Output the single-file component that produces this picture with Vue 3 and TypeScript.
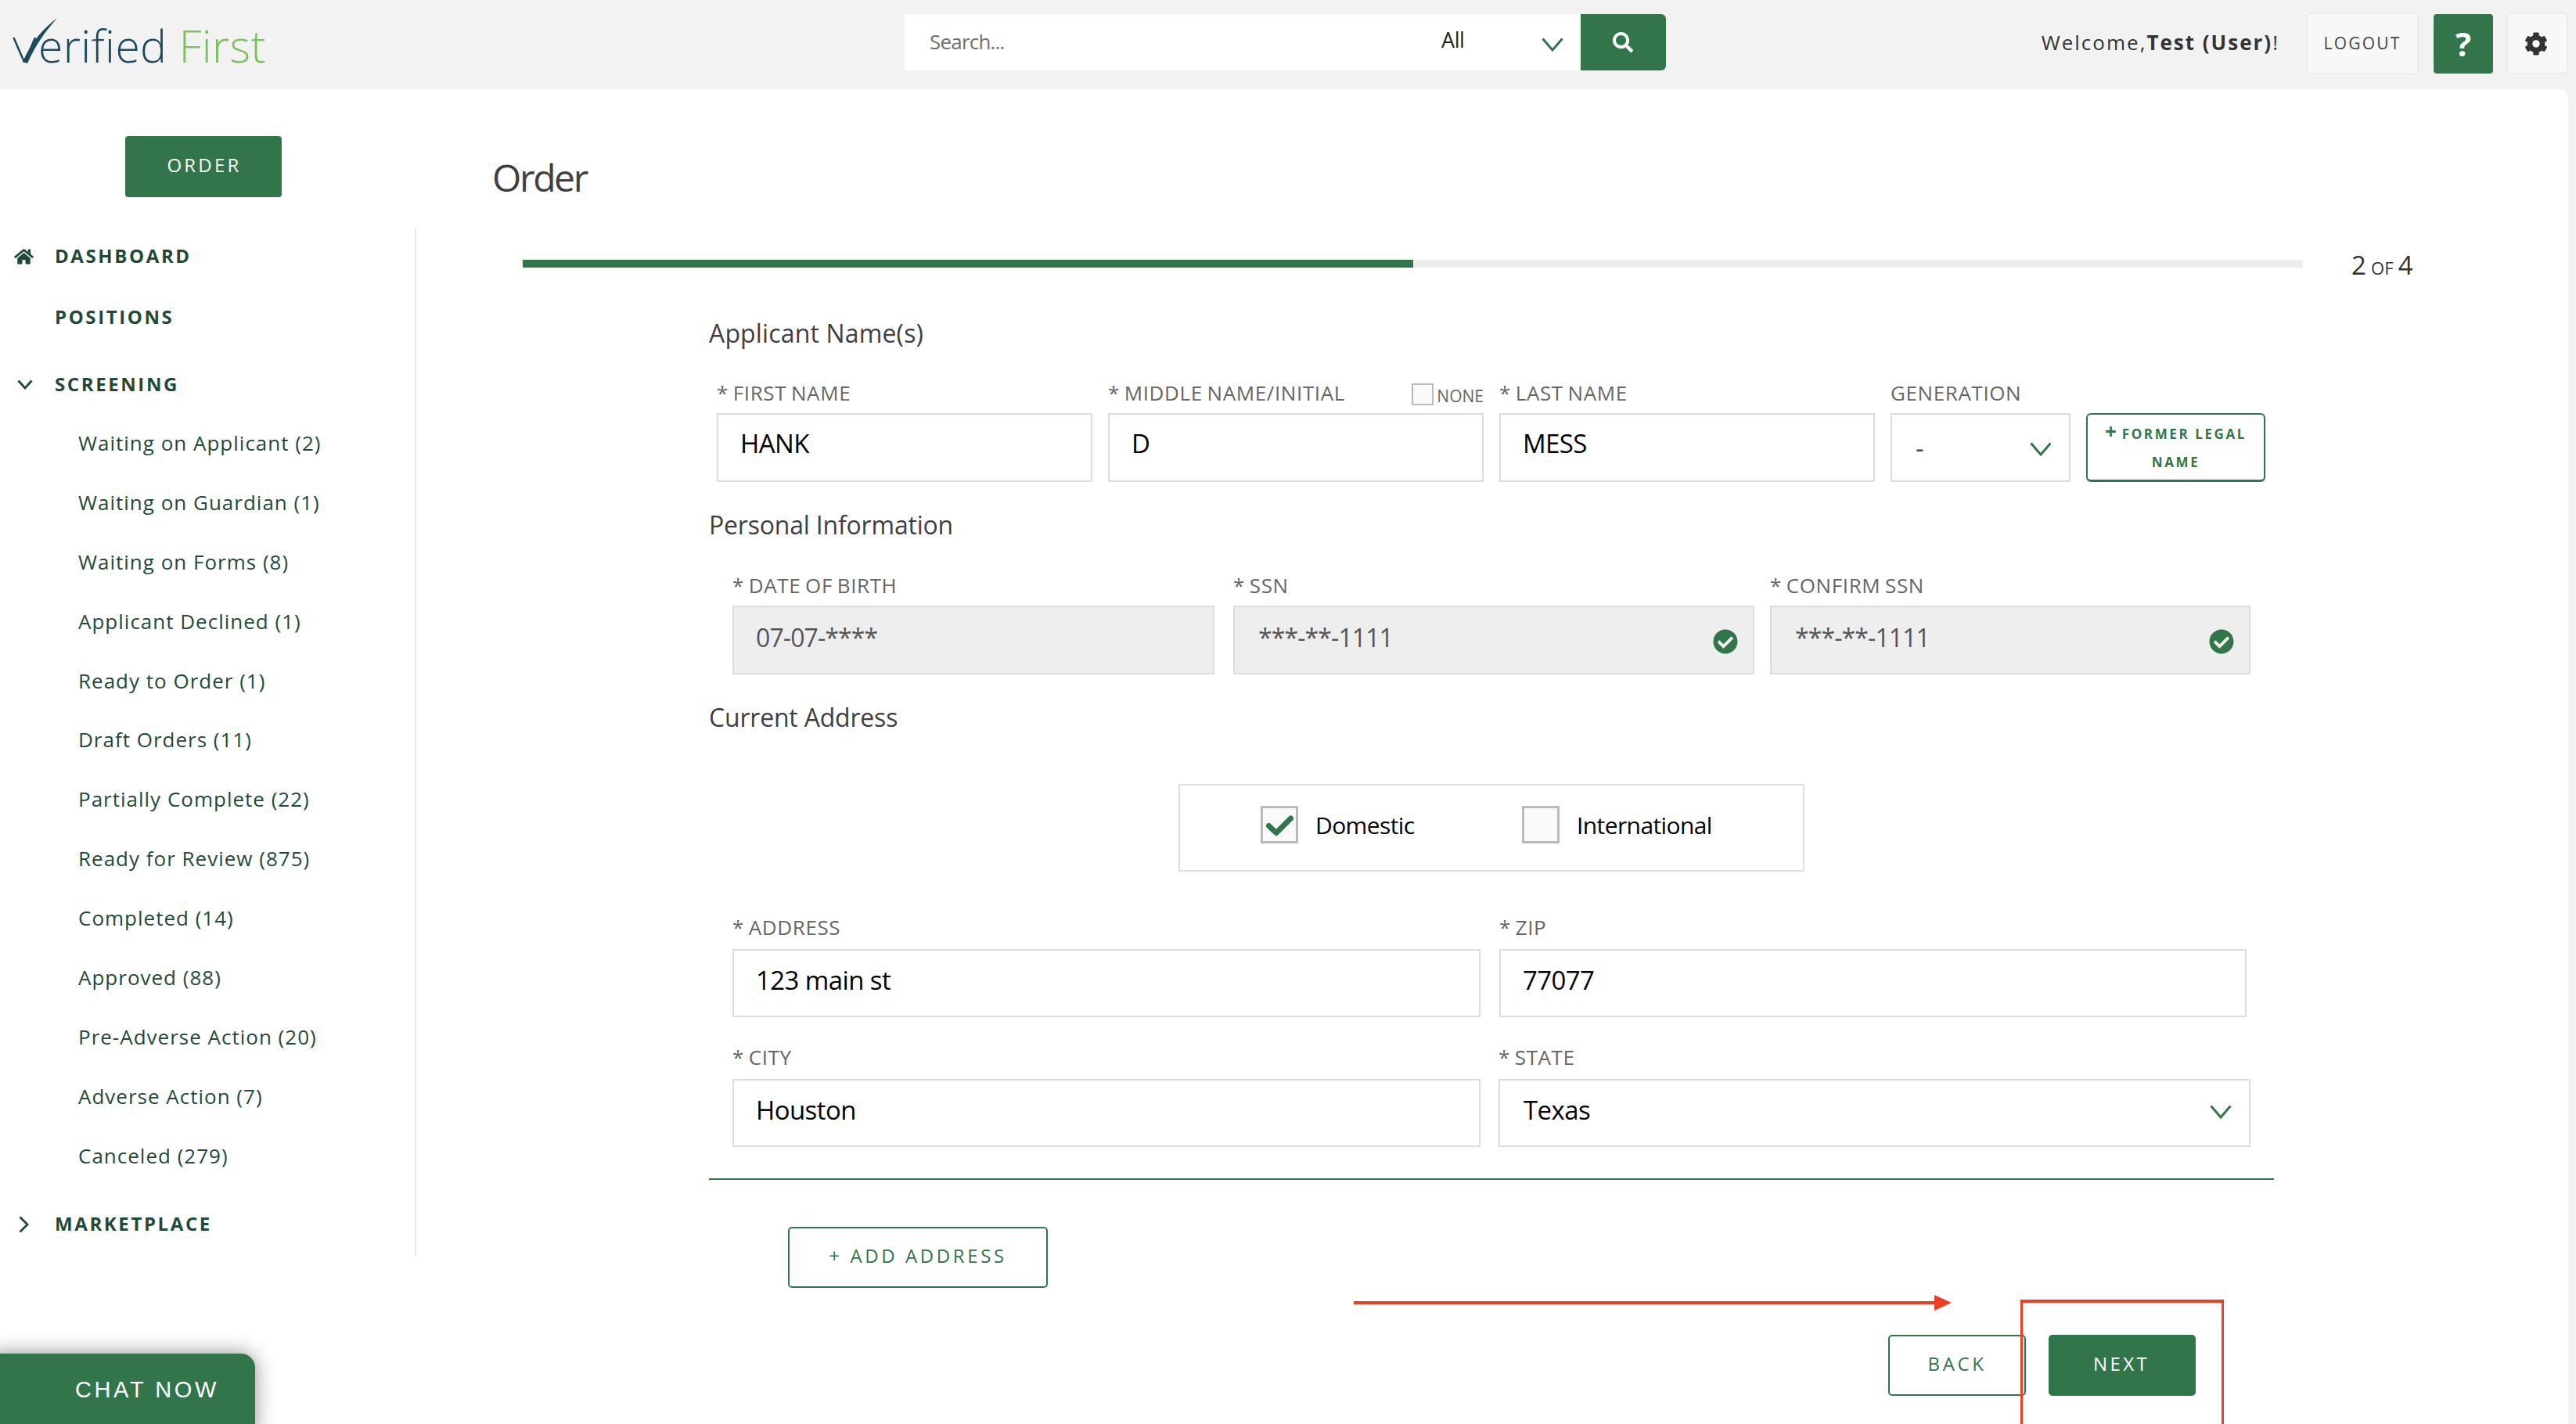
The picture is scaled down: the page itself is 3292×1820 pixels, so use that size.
<script setup lang="ts">
const subItems: string[] = [
  'Waiting on Applicant (2)',
  'Waiting on Guardian (1)',
  'Waiting on Forms (8)',
  'Applicant Declined (1)',
  'Ready to Order (1)',
  'Draft Orders (11)',
  'Partially Complete (22)',
  'Ready for Review (875)',
  'Completed (14)',
  'Approved (88)',
  'Pre-Adverse Action (20)',
  'Adverse Action (7)',
  'Canceled (279)'
]
const checkCircle =
  'M504 256c0 136.967-111.033 248-248 248S8 392.967 8 256 119.033 8 256 8s248 111.033 248 248zM227.314 387.314l184-184c6.248-6.248 6.248-16.379 0-22.627l-22.627-22.627c-6.248-6.249-16.379-6.25-22.628 0L216 308.118l-70.059-70.059c-6.248-6.248-16.379-6.248-22.628 0l-22.627 22.627c-6.248 6.248-6.248 16.379 0 22.627l104 104c6.249 6.249 16.379 6.249 22.628.001z'
</script>

<template>
  <div class="page">
    <header class="topbar">
      <div class="logo">
        <span class="logo-a"><span class="logo-v">V</span>erified</span> <span class="logo-b">First</span>
        <svg class="swoosh" viewBox="0 0 80 90"><path d="M29 79 C41 52 56 36 73 23 C60 38 46 56 35 81 Z" fill="#1d4a5e" /></svg>
      </div>
      <div class="search">
        <div class="search-input">Search...</div>
        <div class="search-all">All</div>
        <svg class="chev search-chev" viewBox="0 0 28 18"><polyline points="1.5,1.5 14,16 26.5,1.5" /></svg>
        <button class="search-btn">
          <svg viewBox="0 0 512 512" class="search-icon"><path fill="#fff" d="M505 442.7L405.3 343c-4.5-4.5-10.6-7-17-7H372c27.6-35.3 44-79.7 44-128C416 93.1 322.9 0 208 0S0 93.1 0 208s93.1 208 208 208c48.3 0 92.7-16.4 128-44v16.3c0 6.4 2.5 12.5 7 17l99.7 99.7c9.4 9.4 24.6 9.4 33.9 0l28.3-28.3c9.4-9.4 9.4-24.6.1-34zM208 336c-70.7 0-128-57.2-128-128 0-70.7 57.2-128 128-128 70.7 0 128 57.2 128 128 0 70.7-57.2 128-128 128z" /></svg>
        </button>
      </div>
      <div class="top-right">
        <div class="welcome">Welcome,<b>Test (User)</b>!</div>
        <button class="ghost logout">LOGOUT</button>
        <button class="help">?</button>
        <button class="ghost gear">
          <svg viewBox="0 0 512 512" class="gear-icon"><path fill="#333" d="M487.4 315.7l-42.6-24.6c4.3-23.2 4.3-47 0-70.2l42.6-24.6c4.9-2.8 7.1-8.6 5.5-14-11.1-35.6-30-67.8-54.7-94.6-3.8-4.1-10-5.1-14.8-2.3L380.8 110c-17.9-15.4-38.5-27.3-60.8-35.1V25.8c0-5.6-3.9-10.5-9.4-11.7-36.7-8.2-74.3-7.8-109.2 0-5.5 1.2-9.4 6.1-9.4 11.7V75c-22.2 7.9-42.8 19.8-60.8 35.1L88.7 85.5c-4.9-2.8-11-1.9-14.8 2.3-24.7 26.7-43.6 58.9-54.7 94.6-1.7 5.4.6 11.2 5.5 14L67.3 221c-4.3 23.2-4.3 47 0 70.2l-42.6 24.6c-4.9 2.8-7.1 8.6-5.5 14 11.1 35.6 30 67.8 54.7 94.6 3.8 4.1 10 5.1 14.8 2.3l42.6-24.6c17.9 15.4 38.5 27.3 60.8 35.1v49.2c0 5.6 3.9 10.5 9.4 11.7 36.7 8.2 74.3 7.8 109.2 0 5.5-1.2 9.4-6.1 9.4-11.7v-49.2c22.2-7.9 42.8-19.8 60.8-35.1l42.6 24.6c4.9 2.8 11 1.9 14.8-2.3 24.7-26.7 43.6-58.9 54.7-94.6 1.5-5.5-.7-11.3-5.6-14.1zM256 336c-44.1 0-80-35.9-80-80s35.9-80 80-80 80 35.9 80 80-35.9 80-80 80z" /></svg>
        </button>
      </div>
    </header>

    <div class="body">
      <aside class="side">
        <button class="order-btn">ORDER</button>
        <nav class="nav">
          <div class="nav-head">
            <svg viewBox="0 0 576 512" class="home"><path fill="#1f4a3a" d="M280.37 148.26L96 300.11V464a16 16 0 0 0 16 16l112.06-.29a16 16 0 0 0 15.92-16V368a16 16 0 0 1 16-16h64a16 16 0 0 1 16 16v95.64a16 16 0 0 0 16 16.05L464 480a16 16 0 0 0 16-16V300L295.67 148.26a12.19 12.19 0 0 0-15.3 0zM571.6 251.47L488 182.56V44.05a12 12 0 0 0-12-12h-56a12 12 0 0 0-12 12v72.61L318.47 43a48 48 0 0 0-61 0L4.34 251.47a12 12 0 0 0-1.6 16.9l25.5 31A12 12 0 0 0 45.15 301l235.22-193.74a12.19 12.19 0 0 1 15.3 0L530.9 301a12 12 0 0 0 16.9-1.6l25.5-31a12 12 0 0 0-1.7-16.93z" /></svg>
            <span>DASHBOARD</span>
          </div>
          <div class="nav-head positions"><span>POSITIONS</span></div>
          <div class="nav-head screening">
            <svg viewBox="0 0 20 13" class="nav-chev-down"><polyline points="1.5,1.5 10,11 18.5,1.5" /></svg>
            <span>SCREENING</span>
          </div>
          <ul class="sub">
            <li v-for="item in subItems" :key="item">{{ item }}</li>
          </ul>
          <div class="nav-head market">
            <svg viewBox="0 0 13 22" class="nav-chev-right"><polyline points="1.5,1.5 11,11 1.5,20.5" /></svg>
            <span>MARKETPLACE</span>
          </div>
        </nav>
      </aside>

      <main class="main">
        <h1 class="title">Order</h1>
        <div class="progress-row">
          <div class="progress"><div class="progress-fill"></div></div>
          <div class="step"><span class="big">2</span> <span class="small">OF</span> <span class="big">4</span></div>
        </div>

        <section class="form">
          <h2 class="heading first">Applicant Name(s)</h2>
          <div class="row row-name">
            <div class="field w480">
              <label class="lab">* FIRST NAME</label>
              <div class="inp">HANK</div>
            </div>
            <div class="field w480">
              <div class="lab lab-split">
                <span>* MIDDLE NAME/INITIAL</span>
                <span class="none"><i class="none-box"></i><span>NONE</span></span>
              </div>
              <div class="inp">D</div>
            </div>
            <div class="field w480">
              <label class="lab">* LAST NAME</label>
              <div class="inp">MESS</div>
            </div>
            <div class="field w230">
              <label class="lab">GENERATION</label>
              <div class="inp sel gen"><span>-</span>
                <svg class="chev" viewBox="0 0 28 18"><polyline points="1.5,1.5 14,16 26.5,1.5" /></svg>
              </div>
            </div>
            <button class="former"><span class="plus">+</span> FORMER LEGAL<br />NAME</button>
          </div>

          <h2 class="heading">Personal Information</h2>
          <div class="row row-personal">
            <div class="field w616">
              <label class="lab">* DATE OF BIRTH</label>
              <div class="inp off">07-07-****</div>
            </div>
            <div class="field w666">
              <label class="lab">* SSN</label>
              <div class="inp off ok">***-**-1111
                <svg viewBox="0 0 512 512" class="ok-icon"><path fill="#33754a" :d="checkCircle" /></svg>
              </div>
            </div>
            <div class="field w614">
              <label class="lab">* CONFIRM SSN</label>
              <div class="inp off ok">***-**-1111
                <svg viewBox="0 0 512 512" class="ok-icon"><path fill="#33754a" :d="checkCircle" /></svg>
              </div>
            </div>
          </div>

          <h2 class="heading">Current Address</h2>
          <div class="kind">
            <div class="kind-opt opt-a">
              <span class="cb">
                <svg viewBox="0 0 48 48" class="cb-check"><polyline points="10.5,25.5 20,34.5 38.5,16" /></svg>
              </span>
              <span>Domestic</span>
            </div>
            <div class="kind-opt">
              <span class="cb"></span>
              <span>International</span>
            </div>
          </div>

          <div class="row row-addr addr-1">
            <div class="field w956">
              <label class="lab">* ADDRESS</label>
              <div class="inp addr">123 main st</div>
            </div>
            <div class="field w955">
              <label class="lab">* ZIP</label>
              <div class="inp addr">77077</div>
            </div>
          </div>
          <div class="row row-addr addr-2">
            <div class="field w956">
              <label class="lab">* CITY</label>
              <div class="inp addr">Houston</div>
            </div>
            <div class="field w961">
              <label class="lab">* STATE</label>
              <div class="inp addr sel state"><span>Texas</span>
                <svg class="chev" viewBox="0 0 28 18"><polyline points="1.5,1.5 14,16 26.5,1.5" /></svg>
              </div>
            </div>
          </div>

          <div class="rule"></div>
          <button class="outline add">+ ADD ADDRESS</button>
          <div class="actions">
            <button class="outline back">BACK</button>
            <button class="next">NEXT</button>
          </div>
        </section>
      </main>
    </div>

    <svg class="arrow" viewBox="0 0 764 20"><rect x="0" y="8" width="746" height="4" fill="#ee3e23" /><polygon points="742,0 764,10 742,20" fill="#ee3e23" /></svg>
    <div class="redbox"></div>
    <div class="chat">CHAT NOW</div>
  </div>
</template>

<style>
html,
body {
  margin: 0;
  background: #f2f2f2;
}
</style>

<style scoped>
* {
  box-sizing: border-box;
}
button {
  font-family: inherit;
  margin: 0;
  padding: 0;
  cursor: pointer;
}
.page {
  position: relative;
  width: 3292px;
  height: 1820px;
  overflow: hidden;
  background: #f2f2f2;
  font-family: "Open Sans", "Noto Sans", sans-serif;
  display: flex;
  flex-direction: column;
}

/* top bar */
.topbar {
  flex: 0 0 114px;
  display: flex;
  align-items: flex-start;
}
.logo {
  position: relative;
  flex: 0 0 1156px;
  padding: 20px 0 0 16px;
  font-size: 57px;
  font-weight: 300;
  line-height: 76px;
  letter-spacing: 0.4px;
  white-space: nowrap;
}
.logo-a {
  color: #1d4a5e;
}
.logo-v {
  display: inline-block;
  width: 33px;
  font-size: 44px;
  transform: scaleX(1.2);
  transform-origin: left bottom;
}
.logo-b {
  color: #7cc05f;
}
.swoosh {
  position: absolute;
  left: 0;
  top: 0;
  width: 80px;
  height: 90px;
}
.search {
  margin-top: 18px;
  width: 973px;
  height: 72px;
  background: #fff;
  display: flex;
  align-items: center;
  border-radius: 0 6px 6px 0;
}
.search-input {
  flex: 0 0 686px;
  padding-left: 32px;
  padding-bottom: 2px;
  font-size: 26px;
  letter-spacing: -0.8px;
  color: #707070;
}
.search-all {
  flex: 0 0 128px;
  font-size: 27px;
  letter-spacing: -0.4px;
  color: #222;
  padding-bottom: 8px;
}
.chev {
  width: 28px;
  height: 18px;
  flex: none;
}
.chev polyline,
.nav-chev-down polyline,
.nav-chev-right polyline {
  fill: none;
  stroke-width: 2.8;
}
.chev polyline {
  stroke: #33754a;
  stroke-width: 3;
}
.nav-chev-down polyline,
.nav-chev-right polyline {
  stroke: #1f4a3a;
}
.search-chev {
  margin-top: 6px;
}
.search-btn {
  margin-left: 22px;
  width: 109px;
  height: 72px;
  background: #33754a;
  border: 0;
  border-radius: 0 6px 6px 0;
  display: flex;
  align-items: center;
  justify-content: center;
  padding: 0 2px 0 0;
}
.search-icon {
  width: 26px;
  height: 26px;
}
.top-right {
  flex: 1;
  display: flex;
  align-items: flex-start;
  padding-top: 16px;
  padding-right: 10px;
  justify-content: flex-end;
}
.welcome {
  margin-right: 34px;
  margin-top: 20px;
  font-size: 26px;
  line-height: 36px;
  letter-spacing: 2px;
  color: #333;
  white-space: nowrap;
}
.ghost {
  background: #f8f8f8;
  border: 2px solid #ececec;
  border-radius: 6px;
  height: 79px;
}
.logout {
  width: 144px;
  font-size: 21px;
  letter-spacing: 2.2px;
  color: #444;
  padding-bottom: 2px;
}
.help {
  margin: 2px 17px 0 19px;
  width: 76px;
  height: 76px;
  background: #33754a;
  border: 0;
  border-radius: 4px;
  color: #fff;
  font-size: 42px;
  font-weight: 700;
  line-height: 70px;
}
.gear {
  width: 79px;
  display: flex;
  align-items: center;
  justify-content: center;
  padding: 0 3px 0 0;
}
.gear-icon {
  width: 30px;
  height: 30px;
}

/* body */
.body {
  flex: 1;
  width: 3282px;
  background: #fff;
  border-top-right-radius: 10px;
  display: flex;
}
.side {
  flex: 0 0 532px;
}
.order-btn {
  display: block;
  margin: 60px 0 0 160px;
  width: 200px;
  height: 78px;
  background: #33754a;
  border: 0;
  border-radius: 4px;
  color: #fff;
  font-size: 24px;
  letter-spacing: 3.2px;
  padding-bottom: 6px;
  padding-left: 2px;
}
.nav {
  margin-top: 40px;
  height: 1314px;
  border-right: 2px solid #e8e8e8;
}
.nav-head {
  height: 70px;
  display: flex;
  align-items: center;
  padding-left: 70px;
  padding-bottom: 2px;
  position: relative;
  font-size: 24px;
  font-weight: 700;
  letter-spacing: 2.6px;
  color: #1f4a3a;
}
.positions {
  margin-top: 8px;
}
.screening {
  margin-top: 16px;
}
.market {
  margin-top: 14px;
}
.home {
  position: absolute;
  left: 18px;
  top: 25px;
  width: 25px;
  height: 22px;
}
.nav-chev-down {
  position: absolute;
  left: 22px;
  top: 29px;
  width: 20px;
  height: 13px;
}
.nav-chev-right {
  position: absolute;
  left: 24px;
  top: 24px;
  width: 13px;
  height: 22px;
}
.sub {
  list-style: none;
  margin: 3px 0 0;
  padding: 0 0 0 100px;
}
.sub li {
  height: 75.9px;
  line-height: 75.9px;
  font-size: 26px;
  letter-spacing: 1px;
  color: #1f4a3a;
  white-space: nowrap;
}

/* main */
.main {
  flex: 1;
  min-width: 0;
}
.title {
  margin: 83px 0 0 97px;
  font-size: 48px;
  line-height: 60px;
  font-weight: 400;
  letter-spacing: -2.4px;
  color: #3f3f42;
}
.progress-row {
  margin: 60px 0 0 136px;
  display: flex;
  align-items: center;
  height: 40px;
}
.progress {
  width: 2275px;
  height: 10px;
  background: #eee;
}
.progress-fill {
  width: 1138px;
  height: 100%;
  background: #33754a;
}
.step {
  margin-left: 62px;
  padding-top: 9px;
  color: #333;
  line-height: 40px;
  word-spacing: 2px;
  white-space: nowrap;
}
.big {
  font-size: 33px;
}
.small {
  font-size: 22px;
}
.form {
  margin: 49px 0 0 374px;
  width: 2000px;
}
.heading {
  margin: 35px 0 0;
  font-size: 32px;
  line-height: 40px;
  font-weight: 400;
  letter-spacing: -0.2px;
  color: #3f3f42;
}
.heading.first {
  margin-top: 0;
  letter-spacing: 0.15px;
}
.row {
  display: flex;
}
.row-name {
  margin-top: 41px;
  padding-left: 10px;
  gap: 20px;
  align-items: flex-end;
}
.row-personal {
  margin-top: 42px;
  padding-left: 30px;
}
.row-personal .w666 {
  margin: 0 20px 0 24px;
}
.row-addr {
  padding-left: 30px;
  gap: 24px;
}
.addr-1 {
  margin-top: 56px;
}
.addr-2 {
  margin-top: 36px;
  gap: 23px;
}
.field {
  display: flex;
  flex-direction: column;
  flex: none;
}
.w480 {
  width: 480px;
}
.w230 {
  width: 230px;
}
.w616 {
  width: 616px;
}
.w666 {
  width: 666px;
}
.w614 {
  width: 614px;
}
.w956 {
  width: 956px;
}
.w955 {
  width: 955px;
}
.w961 {
  width: 961px;
}
.lab {
  display: block;
  height: 30px;
  margin-bottom: 11px;
  font-size: 26px;
  line-height: 30px;
  letter-spacing: 0.6px;
  word-spacing: -1.5px;
  color: #666;
  white-space: nowrap;
}
.row-addr .lab {
  margin-bottom: 13px;
}
.lab-split {
  display: flex;
  justify-content: space-between;
  align-items: flex-start;
}
.none {
  display: flex;
  align-items: flex-end;
  gap: 4px;
  margin-top: 3px;
  font-size: 21px;
  letter-spacing: 0;
  line-height: 24px;
}
.none-box {
  display: block;
  width: 28px;
  height: 28px;
  border: 2px solid #bbb;
  border-radius: 1px;
  background: #fafafa;
}
.inp {
  position: relative;
  height: 88px;
  border: 2px solid #ddd;
  display: flex;
  align-items: center;
  padding: 0 28px 11px;
  font-size: 33px;
  letter-spacing: -0.6px;
  color: #000;
}
.off {
  background: #eee;
  color: #555;
  padding-bottom: 8px;
  font-size: 32px;
  letter-spacing: -0.9px;
}
.ok {
  padding-left: 30px;
}
.ok-icon {
  position: absolute;
  right: 19px;
  top: 28px;
  width: 32px;
  height: 32px;
}
.sel {
  justify-content: space-between;
}
.gen {
  padding: 0 22px 0 30px;
  color: #444;
}
.gen .chev {
  margin-top: 4px;
}
.state {
  padding-left: 30px;
  padding-right: 22px;
}
.state .chev {
  margin-top: 4px;
}
.addr {
  height: 87px;
  padding-bottom: 8px;
  color: #000;
}
.former {
  flex: none;
  width: 229px;
  height: 88px;
  border: 2px solid #33754a;
  border-bottom-width: 3px;
  border-radius: 6px;
  background: #fff;
  color: #33754a;
  font-size: 17px;
  font-weight: 700;
  line-height: 36px;
  letter-spacing: 2.6px;
  padding-top: 3px;
  white-space: nowrap;
}
.plus {
  font-size: 26px;
  line-height: 20px;
  letter-spacing: 0;
}
.kind {
  margin: 65px 0 0 600px;
  width: 800px;
  height: 112px;
  border: 2px solid #ddd;
  display: flex;
  align-items: flex-start;
  padding: 26px 0 0 103px;
  font-size: 30px;
  letter-spacing: -0.6px;
  color: #000;
}
.kind-opt {
  display: flex;
  align-items: center;
  gap: 22px;
  height: 48px;
}
.opt-a {
  width: 334px;
}
.cb {
  position: relative;
  width: 48px;
  height: 48px;
  border: 3px solid #bbb;
  background: #fafafa;
  flex: none;
}
.cb-check {
  position: absolute;
  left: -3px;
  top: -3px;
  width: 48px;
  height: 48px;
}
.cb-check polyline {
  fill: none;
  stroke: #33754a;
  stroke-width: 7;
  stroke-linecap: round;
  stroke-linejoin: round;
}
.rule {
  margin-top: 40px;
  height: 2px;
  background: #33754a;
}
.outline {
  background: #fff;
  border: 2px solid #33754a;
  border-radius: 5px;
  color: #33754a;
  font-size: 24px;
  letter-spacing: 3.6px;
  height: 78px;
  padding-bottom: 6px;
}
.add {
  display: block;
  margin: 60px 0 0 101px;
  width: 332px;
}
.actions {
  margin: 60px 100px 0 0;
  display: flex;
  justify-content: flex-end;
  gap: 29px;
}
.back {
  width: 176px;
}
.next {
  width: 188px;
  height: 78px;
  border: 0;
  border-radius: 5px;
  background: #33754a;
  color: #fff;
  font-size: 24px;
  letter-spacing: 3.4px;
  padding-bottom: 6px;
  padding-right: 2px;
}

/* annotations and floating chat */
.arrow {
  position: absolute;
  left: 1730px;
  top: 1655px;
  width: 764px;
  height: 20px;
}
.redbox {
  position: absolute;
  left: 2582px;
  top: 1661px;
  width: 260px;
  height: 180px;
  border: 3px solid #ee3e23;
  border-top-width: 4px;
}
.chat {
  position: absolute;
  left: -20px;
  top: 1730px;
  width: 346px;
  height: 110px;
  padding: 29px 0 0 116px;
  background: #33754a;
  border-radius: 18px;
  box-shadow: 0 0 26px rgba(0, 0, 0, 0.45);
  color: #fff;
  font-family: "Liberation Sans", Arial, sans-serif;
  font-size: 29px;
  line-height: 34px;
  letter-spacing: 3.6px;
  white-space: nowrap;
}
</style>
